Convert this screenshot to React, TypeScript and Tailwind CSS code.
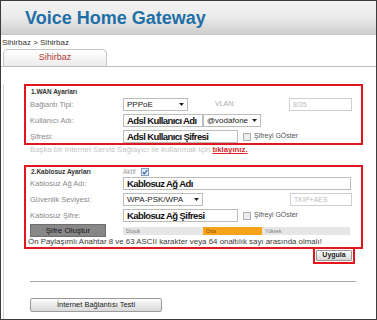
import React from "react";

function Arrow() {
  return (
    <svg width="5" height="3" viewBox="0 0 5 3" className="shrink-0">
      <path d="M0 0h5L2.5 3z" fill="#222" />
    </svg>
  );
}

function Check({ checked = false }: { checked?: boolean }) {
  return (
    <span
      className={`flex h-[8px] w-[8px] shrink-0 items-center justify-center border ${
        checked ? "border-[#7f9cc4] bg-[#dfe9f6]" : "border-[#b0b0b0] bg-[#ececec]"
      }`}
    >
      {checked && (
        <svg width="6" height="6" viewBox="0 0 6 6">
          <path d="M0.8 3.2l1.5 1.6L5.3 1" stroke="#2a5db0" strokeWidth="1.2" fill="none" />
        </svg>
      )}
    </span>
  );
}

const label = "w-[97px] shrink-0 pl-[4px] text-[7.5px] text-[#8a8a8a] whitespace-nowrap";
const boldInput =
  "flex h-[13px] items-center border border-[#bcbcbc] bg-white pl-[3px] text-[9.5px] font-bold tracking-[-0.6px] text-[#111] leading-none";
const selectBox =
  "flex h-[13px] items-center justify-between border border-[#bcbcbc] bg-white pl-[3px] pr-[3px] text-[8px] text-[#222] leading-none";
const disabledInput =
  "flex h-[13px] items-center border border-[#cfcfcf] bg-white pl-[3px] text-[7px] text-[#bdbdbd] leading-none";

export default function App() {
  return (
    <div
      className="h-[320px] w-[377px] overflow-hidden border border-[#3c3c3c] bg-white"
      style={{ fontFamily: '"Liberation Sans", Arial, sans-serif' }}
    >
      <div className="h-[34px] border-b border-[#c6c6c6] bg-gradient-to-b from-[#f3f3f3] via-[#ebebeb] to-[#cecece] pl-[24px] text-[18px] font-bold leading-[34px] text-[#1f6fa6]">
        Voice Home Gateway
      </div>

      <div className="mt-[3px] pl-[1px] text-[8px] leading-[9px] text-[#333]">Sihirbaz &gt; Sihirbaz</div>

      <div className="mt-[2px] border-b border-[#bdbdbd] pl-[2px]">
        <div className="flex h-[17px] w-[104px] items-center justify-center rounded-t-[5px] border border-b-0 border-[#c4c4c4] bg-gradient-to-b from-white to-[#ebebeb] text-[9px] text-[#b53a35]">
          Sihirbaz
        </div>
      </div>

      <div className="ml-[2px] h-full border-l border-[#d4d4d4]">
        {/* WAN */}
        <div className="ml-[20px] mt-[17px] w-[339px] border-2 border-[#e3161e]">
          <div className="flex h-[12px] items-center pl-[5px] text-[6.5px] font-bold text-[#333]">1.WAN Ayarları</div>
          <div className="flex h-[13px] items-center">
            <div className={label}>Bağlantı Tipi:</div>
            <div className={`${selectBox} w-[65px]`}>
              <span>PPPoE</span>
              <Arrow />
            </div>
            <div className="ml-[27px] w-[74px] text-[7px] text-[#aaa]">VLAN:</div>
            <div className={`${disabledInput} w-[63px]`}>8/35</div>
          </div>
          <div className="mt-[3px] flex h-[13px] items-center">
            <div className={label}>Kullanıcı Adı:</div>
            <div className={`${boldInput} w-[80px] overflow-hidden whitespace-nowrap`}>Adsl Kullanıcı Adı</div>
            <div className={`${selectBox} w-[58px] text-[7.5px]`}>
              <span>@vodafone</span>
              <Arrow />
            </div>
          </div>
          <div className="mt-[3px] flex h-[13px] items-center">
            <div className={label}>Şifresi:</div>
            <div className={`${boldInput} w-[115px] whitespace-nowrap`}>Adsl Kullanıcı Şifresi</div>
            <div className="ml-[5px]">
              <Check />
            </div>
            <span className="ml-[3px] text-[7px] text-[#555]">Şifreyi GÖster</span>
          </div>
        </div>

        <div className="ml-[26px] flex h-[10px] items-center whitespace-nowrap text-[7.8px] text-[#c4c4c4]">
          Başka bir Internet Servis Sağlayıcı ile kullanmak için&nbsp;
          <span className="font-bold text-[#d8232a] underline">tıklayınız.</span>
        </div>

        {/* Kablosuz */}
        <div className="ml-[20px] mt-[10px] w-[339px] border-2 border-[#e3161e]">
          <div className="flex h-[10px] items-center">
            <div className="w-[97px] shrink-0 pl-[5px] text-[6.5px] font-bold text-[#333]">2.Kablosuz Ayarları</div>
            <span className="text-[6.5px] text-[#999]">Aktif</span>
            <div className="ml-[5px]">
              <Check checked />
            </div>
          </div>
          <div className="flex h-[13px] items-center">
            <div className={label}>Kablosuz Ağ Adı:</div>
            <div className={`${boldInput} w-[228px]`}>Kablosuz Ağ Adı</div>
          </div>
          <div className="mt-[3px] flex h-[13px] items-center">
            <div className={label}>Güvenlik Seviyesi:</div>
            <div className={`${selectBox} w-[80px]`}>
              <span>WPA-PSK/WPA</span>
              <Arrow />
            </div>
            <div className={`${disabledInput} ml-[87px] w-[62px]`}>TKIP+AES</div>
          </div>
          <div className="mt-[3px] flex h-[13px] items-center">
            <div className={label}>Kablosuz Şifre:</div>
            <div className={`${boldInput} w-[115px] whitespace-nowrap`}>Kablosuz Ağ Şifresi</div>
            <div className="ml-[5px]">
              <Check />
            </div>
            <span className="ml-[3px] text-[7px] text-[#555]">Şifreyi GÖster</span>
          </div>
          <div className="mt-[2px] flex h-[13px] items-center">
            <div className="w-[97px] shrink-0 pl-[4px]">
              <div className="flex h-[13px] w-[76px] items-center justify-center border border-[#6e6e6e] bg-[#878787] text-[8px] text-[#1a1a1a]">
                Şifre Oluştur
              </div>
            </div>
            <div className="flex h-[8px] w-[227px] bg-[#e6e6e6] text-[5px] leading-[8px] text-[#7a7a7a]">
              <div className="w-[80px] pl-[3px]">Düşük</div>
              <div className="w-[59px] bg-[#f7a21b] pl-[3px] text-[#8a4b00]">Orta</div>
              <div className="pl-[3px]">Yüksek</div>
            </div>
          </div>
          <div className="flex h-[10px] items-center whitespace-nowrap pl-[2px] text-[7.9px] text-[#3a3a3a]">
            Ön Paylaşımlı Anahtar 8 ve 63 ASCII karakter veya 64 onaltılık sayı arasında olmalı!
          </div>
        </div>

        <div className="ml-[309px] mt-[-2px] flex h-[17px] w-[42px] items-center justify-center border-2 border-[#e3161e]">
          <div className="flex h-[11px] w-[36px] items-center justify-center rounded-[1px] border border-[#999] bg-gradient-to-b from-white to-[#d6d6d6] text-[7px] font-bold text-[#222]">
            Uygula
          </div>
        </div>

        <div className="ml-[26px] mt-[17px] h-px w-[326px] bg-[#a8a8a8]" />

        <div className="ml-[26px] mt-[16px] flex h-[14px] w-[132px] items-center justify-center rounded-[2px] border border-[#9a9a9a] bg-gradient-to-b from-[#fbfbfb] to-[#d9d9d9] text-[7.5px] text-[#222]">
          İnternet Bağlantısı Testi
        </div>
      </div>
    </div>
  );
}
